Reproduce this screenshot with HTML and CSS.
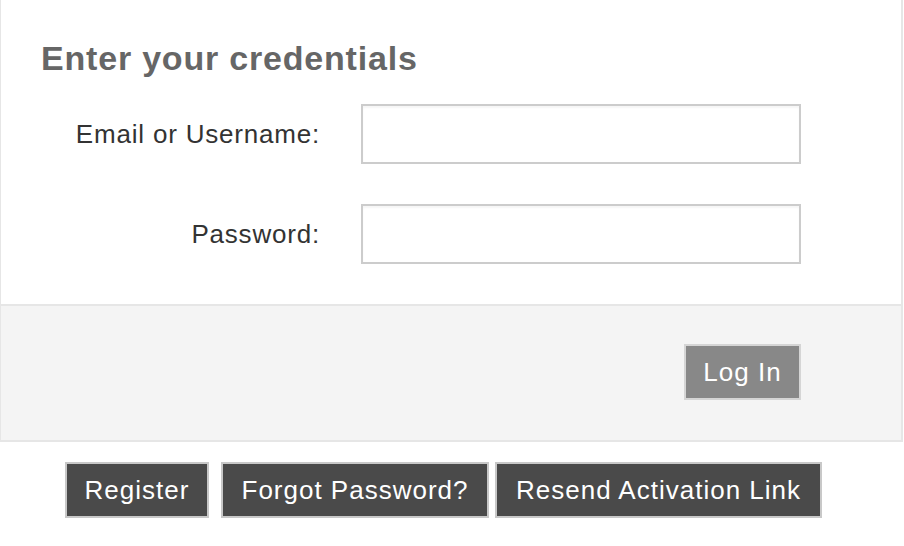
FILE: index.html
```html
<!DOCTYPE html>
<html>
<head>
<meta charset="utf-8">
<link rel="stylesheet" href="styles.css">
</head>
<body>
<div class="panel">
  <div class="panel-body">
    <h2 class="title">Enter your credentials</h2>
    <div class="form">
      <label class="label" for="user">Email or Username:</label>
      <input class="field" id="user" type="text">
      <label class="label" for="pass">Password:</label>
      <input class="field" id="pass" type="password">
    </div>
  </div>
  <div class="panel-footer">
    <button class="btn btn-login">Log In</button>
  </div>
</div>
<div class="links">
  <button class="btn btn-dark btn-register">Register</button>
  <button class="btn btn-dark btn-forgot">Forgot Password?</button>
  <button class="btn btn-dark btn-resend">Resend Activation Link</button>
</div>
</body>
</html>
```
FILE: styles.css
```css
html, body {
  margin: 0;
  padding: 0;
  background: #fff;
}
body {
  font-family: "Liberation Sans", Arial, sans-serif;
  width: 904px;
  height: 546px;
  overflow: hidden;
}
.panel {
  width: 903px;
  box-sizing: border-box;
  border: 2px solid #e6e6e6;
  border-top: none;
  border-left-width: 1px;
}
.panel-body {
  padding: 0 0 40px 0;
}
.title {
  margin: 0;
  padding: 38px 0 0 40px;
  height: 68px;
  box-sizing: border-box;
  font-size: 34px;
  line-height: 40px;
  font-weight: bold;
  color: #666;
  letter-spacing: 0.8px;
}
.form {
  display: grid;
  grid-template-columns: 319px 440px;
  column-gap: 41px;
  row-gap: 40px;
  align-items: center;
  margin-top: 36px;
}
.label {
  text-align: right;
  font-size: 26px;
  color: #333;
  letter-spacing: 0.8px;
}
.field {
  box-sizing: border-box;
  width: 440px;
  height: 60px;
  margin: 0;
  border: 2px solid #cccccc;
  border-radius: 0;
  background: #fff;
  box-shadow: inset 0 2px 2px rgba(0,0,0,0.04);
  outline: none;
  font-size: 24px;
  padding: 0 10px;
}
.panel-footer {
  background: #f4f4f4;
  border-top: 2px solid #e6e6e6;
  height: 136px;
  padding: 38px 100px 0 0;
  box-sizing: border-box;
  display: flex;
  justify-content: flex-end;
  align-items: flex-start;
}
.btn {
  font-family: "Liberation Sans", Arial, sans-serif;
  font-size: 26px;
  letter-spacing: 1px;
  color: #fff;
  border-radius: 0;
  margin: 0;
  cursor: pointer;
  box-sizing: border-box;
  height: 56px;
  padding: 0;
}
.btn-login {
  width: 117px;
  background: #888888;
  border: 2px solid #d5d5d5;
}
.links {
  display: flex;
  padding: 20px 0 0 65px;
}
.btn-dark {
  background: #4a4a4a;
  border: 2px solid #c8c8c8;
}
.btn-register {
  width: 144px;
}
.btn-forgot {
  width: 268px;
  margin-left: 12px;
}
.btn-resend {
  width: 327px;
  margin-left: 6px;
}
```
